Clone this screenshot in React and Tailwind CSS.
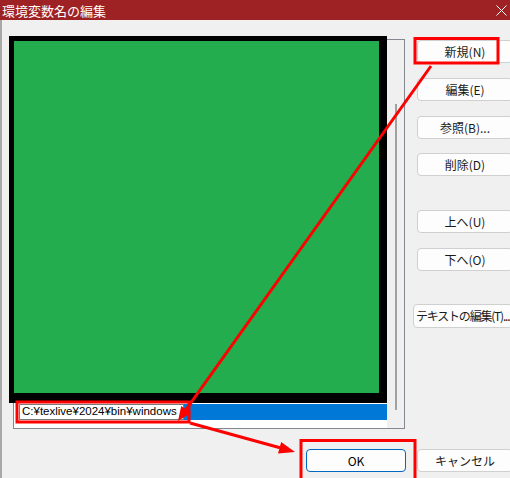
import React from "react";

const jp = { fontFamily: '"Noto Sans CJK JP", "Noto Sans", sans-serif' };

function Btn({ children, className = "" }) {
  return (
    <div
      className={
        "h-[23px] w-[96px] shrink-0 whitespace-nowrap rounded-[4px] border border-[#d0d0d0] bg-[#fdfdfd] flex items-center justify-center text-[12px] text-[#1a1a1a] " +
        className
      }
      style={jp}
    >
      {children}
    </div>
  );
}

export default function App() {
  return (
    <div className="relative w-[510px] h-[478px] overflow-hidden bg-[#f0f0f0]">
      {/* title bar */}
      <div className="h-[20px] bg-[#9e2224] flex items-center justify-between pl-[2px] pr-[3px]">
        <span className="text-white text-[13px] leading-none" style={jp}>
          環境変数名の編集
        </span>
        <svg width="11" height="11" viewBox="0 0 11 11">
          <path d="M0.5 0.5 L10.5 10.5 M10.5 0.5 L0.5 10.5" stroke="#fff" strokeWidth="1" />
        </svg>
      </div>

      <div className="flex h-[458px] border-l-2 border-[#a9a9a9]">
        {/* list */}
        <div className="shrink-0 ml-[11px] mt-[19px] w-[392px] h-[390px] border border-[#828790] bg-white flex">
          <div className="flex-1 flex flex-col justify-end pb-[8px] pl-[5px]">
            <div className="h-[16px] flex">
              <div
                className="w-[165px] h-[16px] whitespace-nowrap overflow-hidden bg-white border border-[#7a7a7a] flex items-center pl-[2px] text-[11.5px] text-black leading-none"
                style={{ fontFamily: '"Liberation Sans", Arial, sans-serif' }}
              >
                C:¥texlive¥2024¥bin¥windows
              </div>
              <div className="flex-1 bg-[#0078d7]" />
            </div>
          </div>
          <div className="w-[17px] bg-[#f0f0f0] flex justify-center pt-[64px] pb-[18px]">
            <div className="w-[2px] h-full bg-[#a0a0a0]" />
          </div>
        </div>

        {/* buttons */}
        <div className="shrink-0 ml-[12px] mt-[20px] flex flex-col">
          <Btn className="h-[22px]">新規(N)</Btn>
          <Btn className="mt-[15px]">編集(E)</Btn>
          <Btn className="mt-[15px]">参照(B)...</Btn>
          <Btn className="mt-[14px]">削除(D)</Btn>
          <Btn className="mt-[34px]">上へ(U)</Btn>
          <Btn className="mt-[15px] h-[22px]">下へ(O)</Btn>
          <Btn className="mt-[33px] -ml-[4px] w-[100px] h-[24px] justify-start pl-[2px] text-[10.5px] tracking-[-1.2px]">
            テキストの編集(T)...
          </Btn>
        </div>
      </div>

      {/* bottom buttons */}
      <div className="absolute left-[306px] top-[449px] flex gap-[11px]">
        <div
          className="w-[100px] h-[23px] rounded-[4px] border border-[#0067c0] bg-[#fdfdfd] flex items-center justify-center text-[12px] text-black"
          style={jp}
        >
          OK
        </div>
        <Btn>キャンセル</Btn>
      </div>

      {/* green cover annotation */}
      <div className="absolute left-[9px] top-[36px] w-[378px] h-[367px] bg-[#23ad4f] border-black border-l-[5px] border-t-[5px] border-r-[8px] border-b-[10px]" />

      {/* red annotations */}
      <svg className="absolute left-0 top-0 pointer-events-none" width="510" height="478">
        <rect x="415" y="38.5" width="83" height="24.5" fill="none" stroke="#ff0000" strokeWidth="3" />
        <rect x="17" y="402" width="172" height="20" fill="none" stroke="#ff0000" strokeWidth="3" />
        <rect x="301" y="440.5" width="114" height="40" fill="none" stroke="#ff0000" strokeWidth="3" />
        <line x1="431" y1="66" x2="186" y2="409.6" stroke="#ff0000" strokeWidth="3" />
        <polygon points="178,421 191,413.1 181.2,406.1" fill="#ff0000" />
        <line x1="190" y1="423" x2="280" y2="447.7" stroke="#ff0000" strokeWidth="3" />
        <polygon points="295,452 278,453.5 281.2,441.9" fill="#ff0000" />
      </svg>
    </div>
  );
}
